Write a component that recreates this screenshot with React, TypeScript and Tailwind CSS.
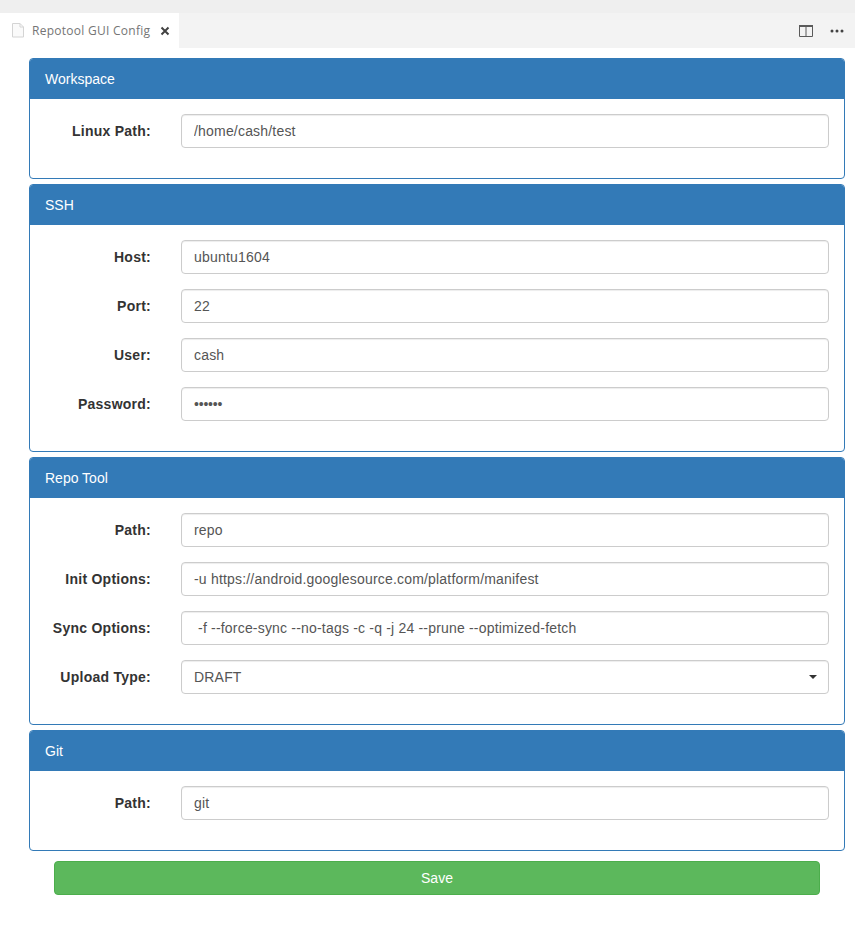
const inputClass =
  "h-[34px] w-full rounded border border-[#ccc] bg-white px-3 text-[14px] text-[#555] shadow-[inset_0_1px_1px_rgba(0,0,0,0.075)] outline-none";

const labelClass =
  "w-[106px] shrink-0 text-right text-[14px] font-bold tracking-[0.25px] text-[#333]";

const Field = ({
  label,
  value,
  type = "text",
}: {
  label: string;
  value: string;
  type?: string;
}) => {
  return (
    <div className="mb-[15px] flex items-center">
      <label className={labelClass}>{label}</label>
      <div className="ml-[30px] w-[648px]">
        <input
          className={`${inputClass} ${type === "password" ? "tracking-[-0.2px]" : "tracking-[0.19px]"}`}
          type={type}
          defaultValue={value}
        />
      </div>
    </div>
  );
};

const Panel = ({
  title,
  children,
}: {
  title: string;
  children: React.ReactNode;
}) => {
  return (
    <div className="mb-[5px] rounded border border-[#337ab7] bg-white">
      <div className="flex h-[40px] items-center rounded-t-[3px] bg-[#337ab7] px-[15px] text-[14px] text-white">
        {title}
      </div>
      <div className="p-[15px]">{children}</div>
    </div>
  );
};

const App = () => {
  return (
    <div className="h-[938px] bg-white font-['Liberation_Sans',Arial,sans-serif] text-[14px]">
      <div className="h-[13px] bg-[#efefef]" />
      <div className="flex h-[35px] items-center justify-between bg-[#f3f3f3]">
        <div className="flex h-full w-[179px] items-center bg-white pl-3">
          <svg width="12" height="15" viewBox="0 0 12 15" fill="none">
            <path
              d="M0.5 0.5H8L11.5 4V14H0.5V0.5Z M8 0.5V4H11.5"
              stroke="#d4d4d4"
              strokeWidth="1"
              fill="#fafafa"
            />
          </svg>
          <span className="ml-2 font-['Open_Sans',sans-serif] text-[12px] tracking-[0.27px] text-[#757575]">
            Repotool GUI Config
          </span>
          <svg className="ml-[10px]" width="10" height="10" viewBox="0 0 10 10">
            <path d="M1.5 1.5L8.5 8.5M8.5 1.5L1.5 8.5" stroke="#424242" strokeWidth="2" />
          </svg>
        </div>
        <div className="flex items-center pr-[11px]">
          <svg width="14" height="12" viewBox="0 0 14 12" fill="none">
            <path d="M0.5 0.5H13.5V11.5H0.5Z M7 2V11.5" stroke="#5a5a5a" strokeWidth="1" />
            <rect x="0" y="0" width="14" height="2" fill="#5a5a5a" />
          </svg>
          <svg className="ml-[17px]" width="14" height="4" viewBox="0 0 14 4" fill="#424242">
            <circle cx="2" cy="2" r="1.5" />
            <circle cx="7" cy="2" r="1.5" />
            <circle cx="12" cy="2" r="1.5" />
          </svg>
        </div>
      </div>

      <div className="ml-[29px] mt-[10px] w-[816px]">
        <Panel title="Workspace">
          <Field label="Linux Path:" value="/home/cash/test" />
        </Panel>
        <Panel title="SSH">
          <Field label="Host:" value="ubuntu1604" />
          <Field label="Port:" value="22" />
          <Field label="User:" value="cash" />
          <Field label="Password:" value="cashcs" type="password" />
        </Panel>
        <Panel title="Repo Tool">
          <Field label="Path:" value="repo" />
          <Field
            label="Init Options:"
            value="-u https://android.googlesource.com/platform/manifest"
          />
          <Field
            label="Sync Options:"
            value=" -f --force-sync --no-tags -c -q -j 24 --prune --optimized-fetch"
          />
          <div className="mb-[15px] flex items-center">
            <label className={labelClass}>Upload Type:</label>
            <div className="relative ml-[30px] w-[648px]">
              <select
                className={`${inputClass} appearance-none tracking-[0.19px]`}
                defaultValue="DRAFT"
              >
                <option>DRAFT</option>
              </select>
              <svg
                className="absolute right-[12px] top-[15px]"
                width="8"
                height="4"
                viewBox="0 0 8 4"
                fill="#333"
              >
                <path d="M0 0H8L4 4Z" />
              </svg>
            </div>
          </div>
        </Panel>
        <Panel title="Git">
          <Field label="Path:" value="git" />
        </Panel>
        <button className="ml-[25px] mt-[5px] h-[34px] w-[766px] rounded border border-[#4cae4c] bg-[#5cb85c] text-[14px] text-white">
          Save
        </button>
      </div>
    </div>
  );
};

export default App;
